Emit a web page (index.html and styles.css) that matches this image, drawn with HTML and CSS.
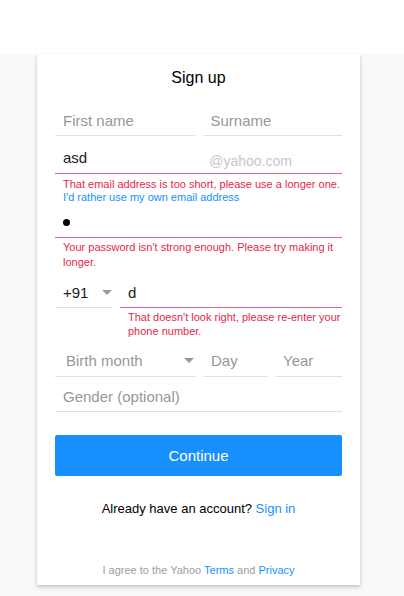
FILE: index.html
```html
<!DOCTYPE html>
<html>
<head>
<meta charset="utf-8">
<link rel="stylesheet" href="styles.css">
</head>
<body>
<div class="header"></div>
<main class="page">
  <section class="card">
    <h1 class="title">Sign up</h1>
    <div class="row two">
      <div class="field"><span class="ph">First name</span></div>
      <div class="field"><span class="ph">Surname</span></div>
    </div>
    <div class="field error email">
      <span class="val">asd</span>
      <span class="suffix">@yahoo.com</span>
    </div>
    <p class="err">That email address is too short, please use a longer one.</p>
    <a class="link own" href="#">I'd rather use my own email address</a>
    <div class="field error pw"><span class="dot"></span></div>
    <p class="err multi">Your password isn't strong enough. Please try making it longer.</p>
    <div class="row phone">
      <div class="field sel"><span class="val">+91</span><span class="arrow"></span></div>
      <div class="field error"><span class="val">d</span></div>
    </div>
    <p class="err multi indent">That doesn't look right, please re-enter your phone number.</p>
    <div class="row birth">
      <div class="field sel"><span class="ph">Birth month</span><span class="arrow"></span></div>
      <div class="field"><span class="ph">Day</span></div>
      <div class="field"><span class="ph">Year</span></div>
    </div>
    <div class="field gender"><span class="ph">Gender (optional)</span></div>
    <button class="btn">Continue</button>
    <p class="signin">Already have an account? <a href="#">Sign in</a></p>
    <p class="foot">I agree to the Yahoo <a href="#">Terms</a> and <a href="#">Privacy</a></p>
  </section>
</main>
</body>
</html>
```

FILE: styles.css
```css
* { box-sizing: border-box; }
html, body { margin: 0; padding: 0; }
body {
  font-family: "Liberation Sans", Arial, sans-serif;
  background: #f9f9f9;
  width: 404px;
  height: 596px;
  overflow: hidden;
}
.header { height: 54px; background: #fff; }
.page { display: flex; padding-left: 37px; }
.card {
  width: 323px;
  background: #fff;
  box-shadow: 0 2px 4px rgba(0,0,0,0.22);
  padding: 14px 18px 8px;
  display: flex;
  flex-direction: column;
}
.title {
  margin: 0;
  font-size: 16px;
  font-weight: normal;
  line-height: 20px;
  text-align: center;
  color: #000;
}
.row { display: grid; }
.two { grid-template-columns: 1fr 1fr; column-gap: 8px; margin-top: 18px; }
.field {
  height: 30px;
  border-bottom: 1px solid #e0e2e5;
  display: flex;
  align-items: center;
  padding: 0 8px 1px;
  font-size: 15px;
  position: relative;
}
.field.error { border-bottom-color: #e8637e; }
.ph { color: #979797; }
.val { color: #1d1d1d; }
.email { margin-top: 8px; padding-bottom: 3px; }
.suffix { margin-left: auto; margin-right: 42px; color: #c3c6ca; font-size: 14px; padding-top: 8px; }
.err {
  margin: 4px 0 0;
  color: #e41f4b;
  font-size: 11px;
  line-height: 13px;
}
.err.multi { line-height: 15px; margin-top: 2px; padding-left: 8px; }
.email + .err { padding-left: 8px; }
.link.own {
  display: block;
  font-size: 11px;
  line-height: 13px;
  color: #188fff;
  text-decoration: none;
  padding-left: 8px;
}
.pw { margin-top: 4px; }
.dot { width: 7px; height: 7px; border-radius: 50%; background: #000; margin-top: 0; }
.phone { grid-template-columns: 57px 1fr; column-gap: 8px; margin-top: 8px; }
.phone .val { font-size: 15px; }
.phone .field { padding-bottom: 1px; }
.err.indent { padding-left: 73px; line-height: 14px; }
.arrow {
  margin-left: auto;
  width: 0; height: 0;
  border-left: 5px solid transparent;
  border-right: 5px solid transparent;
  border-top: 5px solid #999;
}
.sel { padding-right: 0; }
.birth { grid-template-columns: 141px 65px 1fr; column-gap: 7px; margin-top: 9px; }
.birth .sel { padding-right: 2px; padding-left: 11px; padding-bottom: 3px; }
.birth .field { padding-bottom: 3px; }
.gender { margin-top: 5px; }
.btn {
  margin-top: 23px;
  height: 41px;
  border: 0;
  border-radius: 2px;
  background: #188fff;
  color: #fff;
  font-family: "Liberation Sans", Arial, sans-serif;
  font-size: 15px;
  padding: 0;
}
.signin {
  margin: 25px 0 0;
  text-align: center;
  font-size: 13px;
  line-height: 16px;
  color: #000;
}
.signin a { color: #188fff; text-decoration: none; }
.foot {
  margin: 46px 0 0;
  text-align: center;
  font-size: 11px;
  line-height: 14px;
  color: #979ea8;
}
.foot a { color: #188fff; text-decoration: none; }
```
